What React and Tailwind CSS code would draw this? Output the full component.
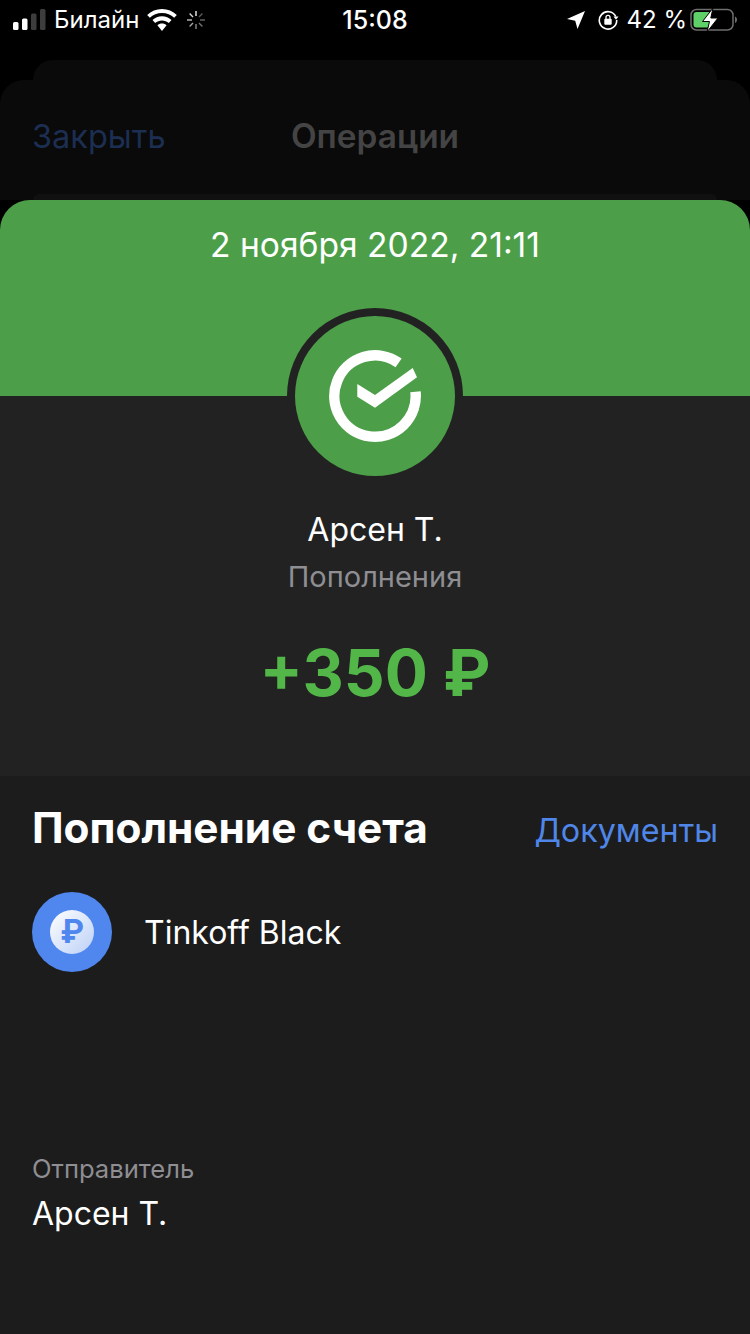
const font = { fontFamily: 'Inter, "Noto Sans", sans-serif' }

function Signal() {
  return (
    <svg width="34" height="22" viewBox="0 0 34 22" className="shrink-0">
      <rect x="0" y="13" width="5.5" height="8" rx="1.5" fill="#fff" />
      <rect x="9" y="9.5" width="5.5" height="11.5" rx="1.5" fill="#fff" />
      <rect x="18" y="4.5" width="5.5" height="16.5" rx="1.5" fill="#3d3d3d" />
      <rect x="27" y="0" width="5.5" height="21" rx="1.5" fill="#3d3d3d" />
    </svg>
  )
}

function Wifi() {
  return (
    <svg width="30" height="22" viewBox="0 0 30 22" className="shrink-0">
      <path d="M15 0C9.3 0 4.1 2.2.2 5.9l2.6 2.9C6 5.8 10.300 4 15 4s9 1.800 12.200 4.800l2.600-2.900C25.900 2.200 20.700 0 15 0z" fill="#fff" />
      <path d="M15 7.300c-3.700 0-7 1.400-9.500 3.700l2.700 3c1.800-1.600 4.200-2.600 6.800-2.600s5 1 6.800 2.600l2.700-3C22 8.700 18.700 7.300 15 7.300z" fill="#fff" />
      <path d="M15 14.600c-1.800 0-3.400.7-4.600 1.700L15 22l4.600-5.700c-1.200-1-2.800-1.700-4.600-1.700z" fill="#fff" />
    </svg>
  )
}

function Spinner() {
  const spokes = [
    [10, 1, 10, 6, 0.95],
    [16.400, 3.600, 13, 7, 0.35],
    [19, 10, 14, 10, 0.4],
    [16.400, 16.400, 13, 13, 0.45],
    [10, 19, 10, 14, 0.55],
    [3.600, 16.400, 7, 13, 0.65],
    [1, 10, 6, 10, 0.75],
    [3.600, 3.600, 7, 7, 0.85],
  ]
  return (
    <svg width="20" height="20" viewBox="0 0 20 20" className="shrink-0">
      {spokes.map((s, i) => (
        <line key={i} x1={s[0]} y1={s[1]} x2={s[2]} y2={s[3]} stroke="#fff" strokeWidth="1.400" opacity={s[4]} />
      ))}
    </svg>
  )
}

function LocationArrow() {
  return (
    <svg width="18" height="18" viewBox="0 0 18 18" className="shrink-0">
      <path d="M18 0L10.500 18 8.200 9.800 0 8z" fill="#fff" />
    </svg>
  )
}

function RotationLock() {
  return (
    <svg width="22" height="20" viewBox="0 0 22 20" fill="none" className="shrink-0">
      <path d="M17.800 6.500A8.700 8.700 0 1 0 18.700 10" stroke="#fff" strokeWidth="1.600" />
      <path d="M15.500 6.500h5l-2.500 3.200z" fill="#fff" />
      <rect x="6.300" y="8.800" width="7.400" height="6" rx="1" fill="#fff" />
      <path d="M8 9V7.300a2 2 0 0 1 4 0V9" stroke="#fff" strokeWidth="1.300" />
    </svg>
  )
}

function Battery() {
  return (
    <svg width="47" height="24" viewBox="0 0 47 24" fill="none" className="shrink-0">
      <rect x="1" y="1.500" width="42" height="20.500" rx="5.500" stroke="#6e6e6e" strokeWidth="1.500" />
      <path d="M45 8.500c1.200.4 2 1.700 2 3.200s-.8 2.800-2 3.200z" fill="#6e6e6e" />
      <rect x="3.500" y="4" width="17.500" height="15.500" rx="3" fill="#5fd068" />
      <path d="M23 0L12.500 13.500h7L17 24l11-14h-7.200z" fill="#fff" stroke="#000" strokeWidth="1" />
    </svg>
  )
}

function SberLogo() {
  return (
    <svg width="92" height="92" viewBox="0 0 92 92" fill="none">
      <path d="M69.600 12.850A40.700 40.700 0 1 0 86.500 41.700" stroke="#fff" strokeWidth="10.500" />
      <path d="M28.300 34L46 45 83.700 18 88 27.300 46 57.700 28.300 46.700z" fill="#fff" />
    </svg>
  )
}

export default function App() {
  return (
    <div className="w-[750px] h-[1334px] overflow-hidden bg-black text-white flex flex-col" style={font}>
      {/* Status bar */}
      <div className="h-[60px] shrink-0 pb-[20px] grid grid-cols-[1fr_auto_1fr] items-center">
        <div className="flex items-center pl-[13px]">
          <Signal />
          <span className="ml-[7px] text-[24px] leading-none">Билайн</span>
          <span className="ml-[8px]"><Wifi /></span>
          <span className="ml-[9px]"><Spinner /></span>
        </div>
        <div className="text-[25px] font-medium leading-none">15:08</div>
        <div className="flex items-center justify-end pr-[13px]">
          <LocationArrow />
          <span className="ml-[13px]"><RotationLock /></span>
          <span className="ml-[7px] text-[24px] leading-none">42 %</span>
          <span className="ml-[3px]"><Battery /></span>
        </div>
      </div>

      {/* Dimmed sheets behind */}
      <div className="h-[20px] shrink-0 mx-[33px] bg-[#0a0a0a] rounded-t-[24px]" />
      <div className="h-[114px] shrink-0 bg-[#0a0a0a] rounded-t-[24px] relative">
        <div className="grid grid-cols-[1fr_auto_1fr] items-center h-[114px] px-[32px]">
          <span className="text-[32.500px] leading-none text-[#1c2e52]">Закрыть</span>
          <span className="text-[33.400px] leading-none font-semibold text-[#444444]">Операции</span>
          <span />
        </div>
      </div>
      <div className="h-[6px] shrink-0 bg-[#0a0a0a]">
        <div className="h-[6px] mx-[33px] bg-[#101010] rounded-t-[16px]" />
      </div>

      {/* Green header */}
      <div className="h-[196px] shrink-0 bg-[#4c9f48] rounded-t-[30px] flex justify-center pt-[27px]">
        <span className="text-[33.600px] leading-[36px]">2 ноября 2022, 21:11</span>
      </div>

      {/* Summary */}
      <div className="h-[380px] shrink-0 bg-[#222222] flex flex-col items-center">
        <div className="-mt-[88px] w-[176px] h-[176px] shrink-0 rounded-full bg-[#222222] flex items-center justify-center">
          <div className="w-[160px] h-[160px] rounded-full bg-[#4c9f48] flex items-center justify-center">
            <SberLogo />
          </div>
        </div>
        <div className="mt-[26px] text-[32px] leading-[40px]">Арсен Т.</div>
        <div className="mt-[10px] text-[29px] leading-[34px] text-[#8e8e93]">Пополнения</div>
        <div className="mt-[41px] text-[64px] leading-[76px] font-bold text-[#52b748]">+350 ₽</div>
      </div>

      {/* Details */}
      <div className="flex-1 bg-[#1c1c1c] px-[32px]">
        <div className="flex items-center justify-between pt-[4px] h-[100px]">
          <span className="text-[42.300px] leading-[48px] font-bold">Пополнение счета</span>
          <span className="text-[32.300px] leading-[40px] text-[#4f86e8] mt-[6px]">Документы</span>
        </div>
        <div className="flex items-center mt-[16px]">
          <div className="w-[80px] h-[80px] rounded-full bg-[#5087ee] flex items-center justify-center">
            <div className="w-[44px] h-[44px] rounded-full bg-gradient-to-br from-white to-[#bcd0f5] flex items-center justify-center text-[#5087ee] text-[32px] leading-none font-bold">₽</div>
          </div>
          <span className="ml-[32px] mt-[2px] text-[32px] leading-[40px]">Tinkoff Black</span>
        </div>
        <div className="mt-[182px] text-[25.600px] leading-[30px] text-[#8e8e93]">Отправитель</div>
        <div className="mt-[10px] text-[32px] leading-[40px]">Арсен Т.</div>
      </div>
    </div>
  )
}
